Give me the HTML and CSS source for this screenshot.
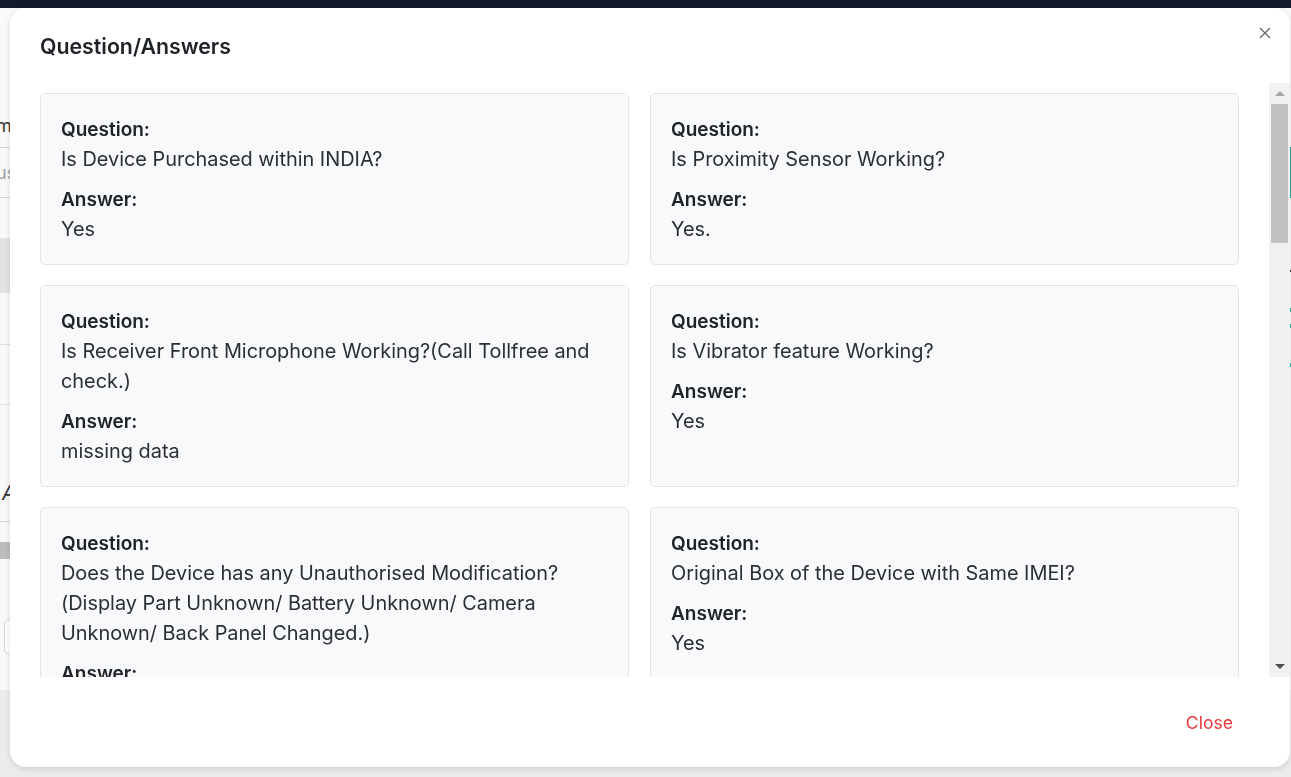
FILE: index.html
```html
<!DOCTYPE html>
<html lang="en">
<head>
<meta charset="utf-8">
<title>Question/Answers</title>
<link rel="stylesheet" href="styles.css">
</head>
<body>
<div class="page">
  <div class="topbar"></div>
  <div class="content">
    <div class="panel">
      <div class="bg-row bg-row-text">m</div>
      <div class="bg-row bg-row-ph">us</div>
      <div class="bg-gap"></div>
      <div class="bg-band"></div>
      <div class="bg-row bg-row-tall"></div>
      <div class="bg-row bg-row-tall2"></div>
      <div class="bg-row bg-row-big">A</div>
      <div class="bg-bar"></div>
      <div class="bg-input-wrap"><div class="bg-input"></div></div>
    </div>
    <div class="page-spacer"></div>
    <div class="side">
      <div class="side-teal side-teal-1"></div>
      <div class="side-dark"></div>
      <div class="side-teal side-teal-2"></div>
      <div class="side-teal side-teal-3"></div>
      <div class="side-teal side-teal-4"></div>
    </div>
  </div>
</div>

<div class="modal" role="dialog" aria-labelledby="qa-title">
  <div class="modal-header">
    <h2 id="qa-title" class="modal-title">Question/Answers</h2>
    <button class="modal-x" aria-label="Close">
      <svg width="12" height="12" viewBox="0 0 12 12"><path d="M1 1L11 11M11 1L1 11" stroke="#6b6b6b" stroke-width="1.4" fill="none"/></svg>
    </button>
  </div>
  <div class="modal-body">
    <div class="scroll-view">
      <div class="qa-grid">
        <div class="qa-card">
          <div class="qa-label">Question:</div>
          <div class="qa-value">Is Device Purchased within INDIA?</div>
          <div class="qa-label qa-gap">Answer:</div>
          <div class="qa-value">Yes</div>
        </div>
        <div class="qa-card">
          <div class="qa-label">Question:</div>
          <div class="qa-value">Is Proximity Sensor Working?</div>
          <div class="qa-label qa-gap">Answer:</div>
          <div class="qa-value">Yes.</div>
        </div>
        <div class="qa-card">
          <div class="qa-label">Question:</div>
          <div class="qa-value">Is Receiver Front Microphone Working?(Call Tollfree and check.)</div>
          <div class="qa-label qa-gap">Answer:</div>
          <div class="qa-value">missing data</div>
        </div>
        <div class="qa-card">
          <div class="qa-label">Question:</div>
          <div class="qa-value">Is Vibrator feature Working?</div>
          <div class="qa-label qa-gap">Answer:</div>
          <div class="qa-value">Yes</div>
        </div>
        <div class="qa-card">
          <div class="qa-label">Question:</div>
          <div class="qa-value">Does the Device has any Unauthorised Modification?(Display Part Unknown/ Battery Unknown/ Camera Unknown/ Back Panel Changed.)</div>
          <div class="qa-label qa-gap">Answer:</div>
          <div class="qa-value">No</div>
        </div>
        <div class="qa-card">
          <div class="qa-label">Question:</div>
          <div class="qa-value">Original Box of the Device with Same IMEI?</div>
          <div class="qa-label qa-gap">Answer:</div>
          <div class="qa-value">Yes</div>
        </div>
      </div>
    </div>
    <div class="scrollbar" aria-hidden="true">
      <div class="sb-btn"><span class="sb-arrow-up"></span></div>
      <div class="sb-track"><div class="sb-thumb"></div></div>
      <div class="sb-btn"><span class="sb-arrow-down"></span></div>
    </div>
  </div>
  <div class="modal-footer">
    <button class="btn-close">Close</button>
  </div>
</div>
</body>
</html>
```

FILE: styles.css
```css
* { box-sizing: border-box; }

html, body {
  margin: 0;
  padding: 0;
  height: 100%;
}

body {
  font-family: Inter, "Noto Sans", "Liberation Sans", sans-serif;
  background: #ebecee;
  color: #212529;
  overflow: hidden;
}

/* ---------- background page ---------- */
.page {
  display: flex;
  flex-direction: column;
  height: 100%;
}

.topbar {
  height: 8px;
  background: #131a2b;
  flex: none;
}

.content {
  display: flex;
  flex: none;
  height: 682px;
  background: #f9f9f9;
}

.panel {
  width: 40px;
  display: flex;
  flex-direction: column;
  padding-top: 95px;
}

.page-spacer { flex: 1; }

.side {
  width: 2px;
  display: flex;
  flex-direction: column;
  padding-top: 139px;
}

.side-teal { background: #1fb5a0; }
.side-teal-1 { height: 51px; }
.side-dark { height: 2px; margin-top: 72px; background: #333; }
.side-teal-2 { height: 4px; margin-top: 36px; }
.side-teal-3 { height: 4px; margin-top: 12px; }
.side-teal-4 { height: 4px; margin-top: 35px; }

.bg-row {
  height: 48px;
  border-bottom: 1px solid #d6d6d6;
  font-size: 18px;
  color: #333;
  display: flex;
  align-items: center;
  text-indent: -4px;
}

.bg-row-text { height: 45px; }
.bg-row-ph { color: #9aa0a6; height: 50px; }

.bg-gap { height: 40px; }

.bg-band {
  height: 55px;
  background: #e2e3e5;
}

.bg-row-tall { height: 52px; border-bottom-color: #dedede; }
.bg-row-tall2 { height: 60px; border-bottom-color: #dedede; }

.bg-row-big {
  height: 117px;
  font-size: 20px;
  font-style: italic;
  text-indent: 2px;
  align-items: flex-start;
  padding-top: 76px;
}

.bg-bar {
  margin-top: 20px;
  height: 17px;
  background: #bdbdbd;
}

.bg-input-wrap {
  padding: 60px 0 0 4px;
}

.bg-input {
  height: 36px;
  border: 1px solid #cfd4da;
  border-radius: 6px;
  background: #fff;
}

/* ---------- modal ---------- */
.modal {
  position: fixed;
  left: 10px;
  top: 8px;
  width: 1280px;
  height: 759px;
  background: #fff;
  border-radius: 16px;
  box-shadow: 0 2px 6px rgba(0, 0, 0, 0.12);
  display: flex;
  flex-direction: column;
  overflow: hidden;
}

.modal-header {
  flex: none;
  height: 75px;
  display: flex;
  align-items: flex-start;
  justify-content: space-between;
  padding: 25px 19px 0 30px;
}

.modal-title {
  margin: 0;
  font-size: 21.3px;
  line-height: 27px;
  font-weight: 600;
  color: #1f2328;
}

.modal-x {
  border: 0;
  background: none;
  padding: 0;
  margin-top: -6px;
  width: 12px;
  height: 12px;
  display: flex;
  cursor: pointer;
}

.modal-body {
  flex: none;
  height: 594px;
  display: flex;
}

.scroll-view {
  flex: 1;
  overflow: hidden;
  padding: 10px 31px 0 30px;
}

.scrollbar {
  flex: none;
  width: 21px;
  background: #f1f1f1;
  display: flex;
  flex-direction: column;
}

.sb-btn {
  flex: none;
  height: 21px;
  display: flex;
  align-items: center;
  justify-content: center;
}

.sb-arrow-up {
  width: 0;
  height: 0;
  border-left: 5px solid transparent;
  border-right: 5px solid transparent;
  border-bottom: 5px solid #a3a3a3;
}

.sb-arrow-down {
  width: 0;
  height: 0;
  border-left: 5px solid transparent;
  border-right: 5px solid transparent;
  border-top: 5px solid #505050;
}

.sb-track {
  flex: 1;
  padding: 0 2px;
}

.sb-thumb {
  height: 139px;
  background: #c1c1c1;
}

.qa-grid {
  display: grid;
  grid-template-columns: 589px 589px;
  column-gap: 21px;
  row-gap: 20px;
}

.qa-card {
  background: #f8f9fa;
  border: 1px solid #e2e4e7;
  border-radius: 5px;
  padding: 20px;
}

.qa-label {
  font-size: 19px;
  line-height: 30px;
  padding-top: 1px;
  margin-bottom: -1px;
  font-weight: 600;
  color: #1f2328;
}

.qa-gap {
  margin-top: 10px;
}

.qa-value {
  font-size: 19.9px;
  line-height: 30px;
  color: #2b2f33;
}

.modal-footer {
  flex: none;
  height: 90px;
  display: flex;
  align-items: center;
  justify-content: flex-end;
  padding: 0 45px 0 0;
}

.btn-close {
  border: 0;
  background: none;
  font-family: inherit;
  font-size: 17.6px;
  color: #e5383b;
  padding: 6px 12px;
  cursor: pointer;
}
```
